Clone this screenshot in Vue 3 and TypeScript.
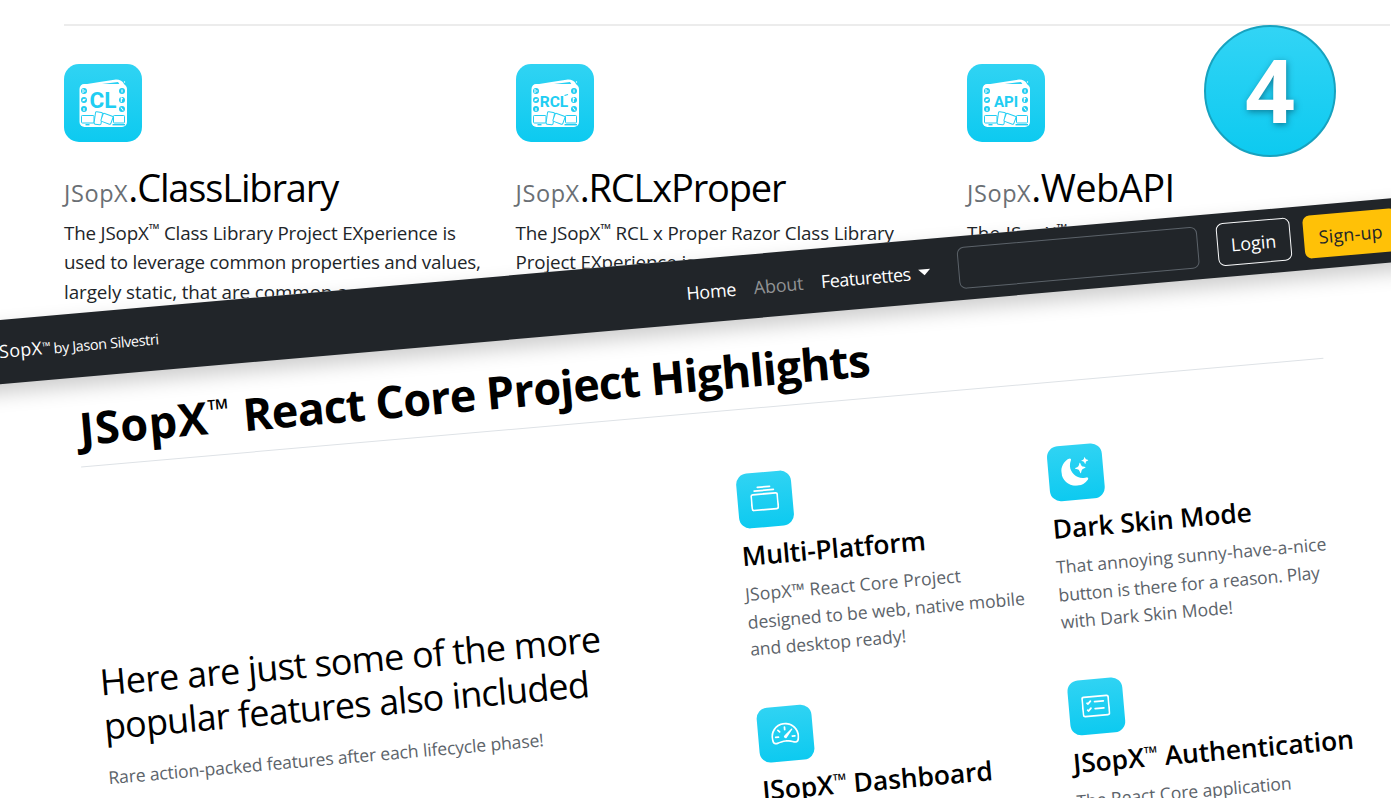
<script setup lang="ts">
import type { Directive } from 'vue'

interface Library { name: string; mark: string; size: number; prefix: number; width: number; lines: [string, number][] }
interface Feature { icon: string; title: string; tm?: boolean; width: number; lines: [string, number][] }

const libraries: Library[] = [
  { name: '.ClassLibrary', mark: 'CL', size: 22.5, prefix: 64, width: 210, lines: [
    ['The JSopX<sup>™</sup> Class Library Project EXperience is', 392],
    ['used to leverage common properties and values,', 417],
    ['largely static, that are common across all', 354],
  ] },
  { name: '.RCLxProper', mark: 'RCL', size: 15.5, prefix: 64, width: 205, lines: [
    ['The JSopX<sup>™</sup> RCL x Proper Razor Class Library', 378],
    ['Project EXperience is a', 194],
  ] },
  { name: '.WebAPI', mark: 'API', size: 15, prefix: 64, width: 143, lines: [
    ['The JSopX<sup>™</sup> Web API Project', 250],
  ] },
]

const features: Feature[] = [
  { icon: 'stack', title: 'Multi-Platform', width: 184, lines: [
    ['JSopX™ React Core Project', 216], ['designed to be web, native mobile', 278], ['and desktop ready!', 156],
  ] },
  { icon: 'moon', title: 'Dark Skin Mode', width: 200, lines: [
    ['That annoying sunny-have-a-nice', 271], ['button is there for a reason. Play', 262], ['with Dark Skin Mode!', 173],
  ] },
  { icon: 'gauge', title: 'Dashboard', tm: true, width: 231, lines: [] },
  { icon: 'list', title: 'Authentication', tm: true, width: 281, lines: [['The React Core application', 216]] },
]

/* Tracks a line of text out or in so that it fills the given measure (layout width, unaffected by rotation). */
const vTrack: Directive<HTMLElement, number> = {
  mounted(el, { value }) {
    const count = (el.textContent ?? '').length
    el.style.letterSpacing = `${((value - el.offsetWidth) / count).toFixed(3)}px`
  },
}
</script>

<template>
  <main class="stage">
    <section class="libraries">
      <article v-for="lib in libraries" :key="lib.name" class="library">
        <div class="tile">
          <svg viewBox="0 0 78 78" width="78" height="78">
            <path d="M17 21 Q35 18 52 15.500 Q58 15.500 60 20 L62 24 L18 24Z" fill="#fff" />
            <path d="M34 20.400 L54 18 L55.500 20.200Z" fill="#29d0f3" />
            <circle cx="60.500" cy="18" r=".7" fill="#fff" />
            <rect x="15.500" y="20" width="47.500" height="43" rx="5" fill="#fff" />
            <g fill="#20cdf2">
              <circle v-for="y in [27, 36, 45]" :key="'l' + y" cx="20" :cy="y" r="3" />
              <circle v-for="y in [27, 36, 45]" :key="'r' + y" cx="58" :cy="y" r="3" />
            </g>
            <g stroke="#fff" stroke-width="1.100" fill="none">
              <path d="M19 29v-4M20 27h1.500M18.500 37l3-2M19 35l1.500 2M20 47v-3M58 25.500v3M57.300 38v-4l1.500 1M56.800 43.500l2.500 3" />
            </g>
            <g stroke="#20cdf2" stroke-width="1" fill="#fff">
              <rect x="17.500" y="51.500" width="12.500" height="7.500" rx=".8" />
              <path d="M21.500 60.700h4" stroke-width="1.400" />
              <rect x="49.500" y="51.500" width="11" height="7.500" rx=".8" />
              <path d="M48.500 60.700h12.500" stroke-width="1.400" />
              <rect x="30.800" y="48" width="7" height="12.500" rx="1.200" transform="rotate(8 34 54)" />
              <rect x="38" y="50.500" width="10.500" height="8.500" rx="1.200" transform="rotate(20 43 54)" />
            </g>
            <text :x="lib.mark === 'RCL' ? 38 : 39" :y="lib.mark === 'CL' ? 43.500 : 42.500" :font-size="lib.size" text-anchor="middle" class="mark">{{ lib.mark }}</text>
            <path v-if="lib.mark === 'RCL'" d="M48.500 31.500l3.500-1" stroke="#20cdf2" stroke-width="1.200" />
          </svg>
        </div>
        <h2><small v-track="lib.prefix">JSopX</small><span v-track="lib.width">{{ lib.name }}</span></h2>
        <p><span v-for="l in lib.lines" :key="l[0]" class="row"><span v-track="l[1]" v-html="l[0]"></span></span></p>
      </article>
    </section>

    <div class="badge"><span>4</span></div>

    <section class="sheet">
      <nav class="bar">
        <div class="brand"><b v-track="57">JSopX<sup>™</sup></b><i v-track="105">by Jason Silvestri</i></div>
        <div class="links">
          <a v-track="50">Home</a>
          <a v-track="50" class="off">About</a>
          <a v-track="90">Featurettes</a>
          <span class="caret"></span>
        </div>
        <div class="search"></div>
        <button class="login"><span v-track="46">Login</span></button>
        <button class="signup"><span v-track="64">Sign-up</span></button>
      </nav>

      <div class="body">
        <h1><span v-track="152">JSopX<sup>™</sup></span><span v-track="629">React Core Project Highlights</span></h1>
        <div class="columns">
          <div class="intro">
            <h3><span v-track="502">Here are just some of the more</span><span v-track="487">popular features also included</span></h3>
            <p><span v-track="437">Rare action-packed features after each lifecycle phase!</span></p>
            <div class="disc"></div>
          </div>
          <div class="grid">
            <article v-for="f in features" :key="f.title" class="feature">
              <div class="chip">
                <svg v-if="f.icon === 'stack'" viewBox="0 0 16 16" width="28" height="28" fill="#fff"><path d="M2.500 3.500a.5.5 0 0 1 0-1h11a.5.5 0 0 1 0 1h-11zm2-2a.5.5 0 0 1 0-1h7a.5.5 0 0 1 0 1h-7zM0 13a1.500 1.500 0 0 0 1.500 1.500h13A1.500 1.500 0 0 0 16 13V6a1.500 1.500 0 0 0-1.500-1.500h-13A1.500 1.500 0 0 0 0 6v7zm1.500.5A.5.5 0 0 1 1 13V6a.5.5 0 0 1 .5-.5h13a.5.5 0 0 1 .5.5v7a.5.5 0 0 1-.5.5h-13z" /></svg>
                <svg v-else-if="f.icon === 'moon'" viewBox="0 0 16 16" width="28" height="28" fill="#fff"><path d="M6 .278a.768.768 0 0 1 .08.858 7.208 7.208 0 0 0-.878 3.460c0 4.021 3.278 7.277 7.318 7.277.527 0 1.040-.055 1.533-.160a.787.787 0 0 1 .810.316.733.733 0 0 1-.031.893A8.349 8.349 0 0 1 8.344 16C3.734 16 0 12.286 0 7.710 0 4.266 2.114 1.312 5.124.060A.752.752 0 0 1 6 .278z" /><path d="M10.794 3.148a.217.217 0 0 1 .412 0l.387 1.162c.173.518.579.924 1.097 1.097l1.162.387a.217.217 0 0 1 0 .412l-1.162.387a1.734 1.734 0 0 0-1.097 1.097l-.387 1.162a.217.217 0 0 1-.412 0l-.387-1.162A1.734 1.734 0 0 0 9.310 6.593l-1.162-.387a.217.217 0 0 1 0-.412l1.162-.387a1.734 1.734 0 0 0 1.097-1.097l.387-1.162zM13.863.099a.145.145 0 0 1 .274 0l.258.774c.115.346.386.617.732.732l.774.258a.145.145 0 0 1 0 .274l-.774.258a1.156 1.156 0 0 0-.732.732l-.258.774a.145.145 0 0 1-.274 0l-.258-.774a1.156 1.156 0 0 0-.732-.732l-.774-.258a.145.145 0 0 1 0-.274l.774-.258c.346-.115.617-.386.732-.732L13.863.100z" /></svg>
                <svg v-else-if="f.icon === 'gauge'" viewBox="0 0 16 16" width="28" height="28" fill="#fff"><path d="M8 4a.5.5 0 0 1 .5.5V6a.5.5 0 0 1-1 0V4.500A.5.5 0 0 1 8 4zM3.732 5.732a.5.5 0 0 1 .707 0l.915.914a.5.5 0 1 1-.708.708l-.914-.915a.5.5 0 0 1 0-.707zM2 10a.5.5 0 0 1 .5-.5h1.586a.5.5 0 0 1 0 1H2.500A.5.5 0 0 1 2 10zm9.500 0a.5.5 0 0 1 .5-.5h1.500a.5.5 0 0 1 0 1H12a.5.5 0 0 1-.5-.5zm.754-4.246a.389.389 0 0 0-.527-.020L7.547 9.310a.910.910 0 1 0 1.302 1.258l3.434-4.297a.389.389 0 0 0-.029-.518z" /><path fill-rule="evenodd" d="M0 10a8 8 0 1 1 15.547 2.661c-.442 1.253-1.845 1.602-2.932 1.250C11.309 13.488 9.475 13 8 13c-1.474 0-3.310.488-4.615.911-1.087.352-2.490.003-2.932-1.250A7.988 7.988 0 0 1 0 10zm8-7a7 7 0 0 0-6.603 9.329c.203.575.923.876 1.680.630C4.397 12.533 6.358 12 8 12s3.604.532 4.923.960c.757.245 1.477-.056 1.680-.631A7 7 0 0 0 8 3z" /></svg>
                <svg v-else viewBox="0 0 16 16" width="28" height="28" fill="#fff"><path d="M14.500 3a.5.5 0 0 1 .5.5v9a.5.5 0 0 1-.5.5h-13a.5.5 0 0 1-.5-.5v-9a.5.5 0 0 1 .5-.5h13zm-13-1A1.500 1.500 0 0 0 0 3.500v9A1.500 1.500 0 0 0 1.500 14h13a1.500 1.500 0 0 0 1.500-1.500v-9A1.500 1.500 0 0 0 14.500 2h-13z" /><path d="M7 5.500a.5.5 0 0 1 .5-.5h5a.5.5 0 0 1 0 1h-5a.5.5 0 0 1-.5-.5zm-1.496-.854a.5.5 0 0 1 0 .708l-1.500 1.500a.5.5 0 0 1-.708 0l-.5-.5a.5.5 0 1 1 .708-.708l.146.147 1.146-1.147a.5.5 0 0 1 .708 0zM7 9.500a.5.5 0 0 1 .5-.5h5a.5.5 0 0 1 0 1h-5a.5.5 0 0 1-.5-.5zm-1.496-.854a.5.5 0 0 1 0 .708l-1.500 1.500a.5.5 0 0 1-.708 0l-.5-.5a.5.5 0 0 1 .708-.708l.146.147 1.146-1.147a.5.5 0 0 1 .708 0z" /></svg>
              </div>
              <h4><span v-track="f.width"><template v-if="f.tm">JSopX<sup>™</sup>&nbsp;</template>{{ f.title }}</span></h4>
              <p><span v-for="l in f.lines" :key="l[0]" class="row"><span v-track="l[1]">{{ l[0] }}</span></span></p>
            </article>
          </div>
        </div>
      </div>
    </section>
  </main>
</template>

<style>
html, body { margin: 0; background: #fff; overflow: hidden; }
</style>

<style scoped>
* { box-sizing: border-box; }
.stage {
  position: relative;
  width: 1391px;
  height: 798px;
  overflow: hidden;
  background: #fff;
  color: #212529;
  font-family: "Open Sans", "Noto Sans", sans-serif;
}
h1, h2, h3, h4, p { margin: 0; color: #000; white-space: nowrap; }
.stage span, small, a, b, i { display: inline-block; white-space: nowrap; }
sup { line-height: 0; vertical-align: baseline; position: relative; }

.libraries {
  margin: 24px 1px 0 64px;
  border-top: 2px solid #ececec;
  padding-top: 38px;
  display: grid;
  grid-template-columns: 451.500px 451.500px 1fr;
}
.tile {
  width: 78px;
  height: 78px;
  border-radius: 15px;
  background: linear-gradient(#30d3f3, #0dcaf0);
}
.tile svg { display: block; }
.mark { font-family: Roboto, sans-serif; font-weight: 700; fill: #20cdf2; }
h2 { margin-top: 17px; height: 56px; line-height: 56px; font-size: 38px; font-weight: 400; }
h2 small { font-size: 23.500px; color: #6a6f74; font-weight: 400; }
.library p { margin-top: 4px; font-size: 18.800px; line-height: 29.300px; color: #212529; }
.library .row { display: block; height: 29.300px; }
.library p :deep(sup) { font-size: 14px; line-height: 0; vertical-align: baseline; position: relative; top: -6px; }

.badge {
  position: absolute;
  left: 1204px;
  top: 25px;
  width: 132px;
  height: 132px;
  padding-bottom: 4px;
  border-radius: 50%;
  border: 2px solid #17a2bf;
  background: linear-gradient(#32d4f5, #0dcaf0);
  display: flex;
  align-items: center;
  justify-content: center;
  color: #fff;
  font-size: 87px;
  font-weight: 700;
  line-height: 1;
  text-shadow: 1px 2px 6px rgba(0, 50, 70, .5);
}

.sheet {
  position: absolute;
  left: -100px;
  top: 320px;
  width: 1640px;
  height: 800px;
  background: #fff;
  transform: rotate(-5deg);
  transform-origin: 100px 0;
}
.bar {
  height: 64px;
  padding: 0 0 1px 91px;
  display: flex;
  align-items: center;
  background: #212529;
  color: #fff;
  font-size: 18px;
  box-shadow: 0 9px 20px rgba(0, 0, 0, .2);
}
.brand { width: 695px; line-height: 26px; }
.brand b { font-weight: 400; }
.brand sup { font-size: 11px; top: -4px; }
.brand i { font-style: normal; font-size: 14.500px; margin-left: 2.500px; }
.links { width: 273px; padding-top: 2px; display: flex; align-items: center; gap: 17.800px; line-height: 26px; }
.links .off { color: #909294; }
.caret { margin-left: -9.500px; border: 6px solid transparent; border-top-color: #fff; border-bottom: 0; }
.search { width: 241px; height: 42px; border: 1px solid #5c636a; border-radius: 7px; margin-right: 18.500px; flex: none; }
button { height: 43.500px; border-radius: 7px; font: inherit; padding: 0; flex: none; }
.login { width: 74px; color: #fff; background: none; border: 1px solid #f8f9fa; margin-right: 13.500px; }
.signup { width: 94px; color: #212529; background: #ffc107; border: 0; }

.body { margin: 0 225px 0 168px; }
h1 { height: 90px; padding: 17px 0 0 1.500px; line-height: 68px; font-size: 45px; font-weight: 700; border-bottom: 1px solid #dee2e6; }
h1 span + span { margin-left: 12.500px; }
h1 sup { font-size: 28px; top: -14px; font-weight: 600; }
.columns { display: grid; grid-template-columns: 650.500px 1fr; }
.intro { padding-top: 193.500px; }
.intro h3 { font-size: 36px; line-height: 44px; font-weight: 400; display: flex; flex-direction: column; align-items: flex-start; }
.intro p { margin-top: 16px; }
p { font-size: 17.600px; line-height: 27.600px; color: #5c636a; }
.disc { width: 92px; height: 92px; border-radius: 50%; background: #2fb4dc; margin: 27.500px 0 0 191px; }
.grid { display: grid; grid-template-columns: 312px 312px; grid-auto-rows: 235px; padding-top: 63.500px; }
.chip {
  width: 55.500px;
  height: 55.500px;
  border-radius: 11px;
  background: linear-gradient(#30d3f3, #0dcaf0);
  display: flex;
  align-items: center;
  justify-content: center;
}
h4 { margin-top: 7px; height: 40px; line-height: 40px; font-size: 26.500px; font-weight: 600; }
h4 sup { font-size: 18px; top: -7px; font-weight: 400; }
.feature p { margin-top: 5px; }
.feature .row { display: block; height: 27.600px; }
</style>
